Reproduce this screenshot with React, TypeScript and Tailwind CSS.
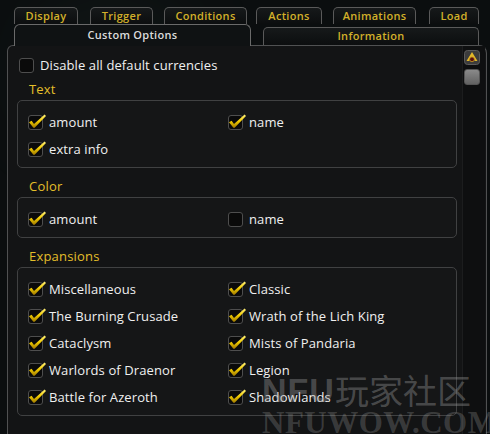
import React from "react";

const FONT = { fontFamily: '"Open Sans", "Noto Sans", sans-serif' };

function Tab({ label, w, ml }: { label: string; w: string; ml: string }) {
  return (
    <div
      className={`${w} ${ml} h-[17px] shrink-0 rounded-t-[5px] border border-b-0 border-[#5a5a5a] bg-gradient-to-b from-[#16191a] to-[#0c0e0f] flex items-center justify-center text-[11px] font-semibold leading-none text-[#d2b02a]`}
    >
      <span className="-mt-[2px] tracking-[0.3px]">{label}</span>
    </div>
  );
}

function Check() {
  return (
    <svg width="20" height="16" viewBox="0 0 20 16" className="absolute left-[0px] top-[-1px]">
      <defs>
        <linearGradient id="cg" x1="0" y1="0" x2="0" y2="1">
          <stop offset="0" stopColor="#fff07a" />
          <stop offset="0.5" stopColor="#f2cc00" />
          <stop offset="1" stopColor="#a07a00" />
        </linearGradient>
      </defs>
      <path d="M1 8.2 L3.6 6.8 L6 10 L16.6 0.6 L18 2 L6.6 13.8 L5.4 13.8 Z" fill="url(#cg)" />
    </svg>
  );
}

function CheckBox({ checked }: { checked: boolean }) {
  return (
    <div className="relative w-[15px] h-[15px] shrink-0">
      <div className="w-[15px] h-[15px] rounded-[3px] border border-[#4e4e4e] bg-[#0a0a0a]" />
      {checked && <Check />}
    </div>
  );
}

function Item({ label, checked = true }: { label: string; checked?: boolean }) {
  return (
    <div className="h-[27px] flex items-center gap-[6px]">
      <CheckBox checked={checked} />
      <span className="text-[13px] leading-none text-[#f0f0f0] tracking-[0.1px]">{label}</span>
    </div>
  );
}

function Heading({ label, first = false }: { label: string; first?: boolean }) {
  return (
    <div className={`${first ? "h-[27px] pt-[8px]" : "h-[29px] pt-[10px]"} pl-[21px]`}>
      <div className="leading-[16px] text-[13px] text-[#e4bf2a] tracking-[0.2px]">{label}</div>
    </div>
  );
}

function Group({ items }: { items: { label: string; checked?: boolean }[] }) {
  return (
    <div className="ml-[9px] w-[440px] rounded-[5px] border border-[#404142] bg-[#151617] pt-[8px] pb-[4px] pl-[10px]">
      <div className="grid grid-cols-[200px_200px]">
        {items.map((it) => (
          <Item key={it.label} label={it.label} checked={it.checked !== false} />
        ))}
      </div>
    </div>
  );
}

function ScrollUp() {
  return (
    <svg width="16" height="15" viewBox="0 0 16 15">
      <rect x="0.5" y="0.5" width="15" height="14" rx="3" fill="#3c3c3c" stroke="#5c5c5c" />
      <path d="M8 2 L13.5 11 L11 11 L8 7.5 L5 11 L2.5 11 Z" fill="#e2b82a" />
      <circle cx="8" cy="9.3" r="2.4" fill="#5a0f0f" stroke="#c99a20" strokeWidth="0.8" />
    </svg>
  );
}

export default function App() {
  return (
    <div
      className="relative w-[490px] h-[434px] overflow-hidden bg-[#0b0e0f] flex flex-col"
      style={FONT}
    >
      <div className="absolute left-[40px] top-[10px] w-[140px] h-[120px] rounded-full bg-[#1e2e2a] opacity-40 blur-2xl" />
      {/* tab row 1 */}
      <div className="relative flex pt-[7px] pl-[14px]">
        <Tab label="Display" w="w-[64px]" ml="ml-0" />
        <Tab label="Trigger" w="w-[63px]" ml="ml-[12px]" />
        <Tab label="Conditions" w="w-[83px]" ml="ml-[11px]" />
        <Tab label="Actions" w="w-[66px]" ml="ml-[9px]" />
        <Tab label="Animations" w="w-[83px]" ml="ml-[11px]" />
        <Tab label="Load" w="w-[50px]" ml="ml-[13px]" />
      </div>
      {/* tab row 2 */}
      <div className="relative flex items-end h-[21px] pl-[14px]">
        <div className="w-[237px] h-[22px] -mb-[1px] rounded-t-[6px] border border-b-0 border-[#6a6a6a] bg-[#0f1213] flex items-center justify-center text-[11px] font-semibold text-[#dcdcdc] tracking-[0.3px] z-10">
          <span className="-mt-[1px]">Custom Options</span>
        </div>
        <div className="ml-[12px] w-[216px] h-[18px] rounded-t-[5px] border border-b-0 border-[#5a5a5a] bg-gradient-to-b from-[#16191a] to-[#0c0e0f] flex items-center justify-center text-[11px] font-semibold text-[#d2b02a] tracking-[0.3px]">
          <span className="-mt-[1px]">Information</span>
        </div>
      </div>
      {/* panel */}
      <div className="relative ml-[7px] w-[480px] flex-1 rounded-tl-[6px] rounded-tr-[8px] border border-b-0 border-[#505152] bg-[#131415] flex">
        <div className="w-[452px] pt-[11px]">
          <div className="h-[16px] pl-[11px] flex items-center gap-[6px]">
            <div className="w-[15px] h-[15px] rounded-[3px] border border-[#4e4e4e] bg-[#0a0a0a]" />
            <span className="text-[13px] leading-none text-[#f0f0f0] tracking-[0.1px]">Disable all default currencies</span>
          </div>
          <Heading label="Text" first />
          <Group items={[{ label: "amount" }, { label: "name" }, { label: "extra info" }]} />
          <Heading label="Color" />
          <Group items={[{ label: "amount" }, { label: "name", checked: false }]} />
          <Heading label="Expansions" />
          <Group
            items={[
              { label: "Miscellaneous" },
              { label: "Classic" },
              { label: "The Burning Crusade" },
              { label: "Wrath of the Lich King" },
              { label: "Cataclysm" },
              { label: "Mists of Pandaria" },
              { label: "Warlords of Draenor" },
              { label: "Legion" },
              { label: "Battle for Azeroth" },
              { label: "Shadowlands" },
            ]}
          />
        </div>
        <div className="ml-[2px] w-[23px] border-l border-[#1c1d1e] bg-[#0e0f10] flex flex-col items-start pl-[1px] pt-[4px] gap-[4px]">
          <ScrollUp />
          <div className="w-[16px] h-[16px] rounded-[3px] bg-gradient-to-b from-[#8a8a8a] to-[#626262] border border-[#555]" />
        </div>
      </div>
      {/* watermark */}
      <div className="absolute left-[262px] top-[373px] flex items-center pointer-events-none">
        <span className="text-[34px] font-black leading-none text-[#9a9a9a]/40 tracking-[1px]" style={{ fontFamily: '"Liberation Sans", sans-serif' }}>NFU</span>
        <span className="text-[34px] leading-none text-[#9a9a9a]/40" style={{ fontFamily: '"Noto Sans CJK SC", sans-serif' }}>玩家社区</span>
      </div>
      <div
        className="absolute left-[262px] top-[407px] text-[31px] font-bold leading-none text-[#9a9a9a]/30 pointer-events-none tracking-[0.5px]"
        style={{ fontFamily: '"Liberation Serif", serif' }}
      >
        NFUWOW.COM
      </div>
    </div>
  );
}
